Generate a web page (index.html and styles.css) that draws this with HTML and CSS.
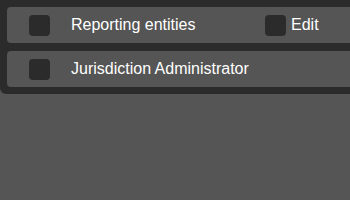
FILE: index.html
```html
<!DOCTYPE html>
<html lang="en">
<head>
  <meta charset="UTF-8">
  <meta name="viewport" content="width=device-width, initial-scale=1.0">
  <title>Permissions</title>
  <link rel="stylesheet" href="styles.css">
</head>
<body>
  <!-- Permission list -->
  <div class="panel">
    <div class="row">
      <span class="check"></span>
      <span class="label">Reporting entities</span>
      <span class="check"></span>
      <span class="action">Edit</span>
    </div>
    <div class="row">
      <span class="check"></span>
      <span class="label">Jurisdiction Administrator</span>
    </div>
  </div>
</body>
</html>
```

FILE: styles.css
```css
body {
  margin: 0;
  background-color: #555555;
  font-family: "Liberation Sans", Arial, sans-serif;
  font-size: 16px;
  color: #ffffff;
}
.panel {
  padding: 7px 0 7px 7px;
  background-color: #2b2b2b;
  border-radius: 0 0 0 6px;
  display: flex;
  flex-direction: column;
  gap: 8px;
}
.row {
  height: 36px;
  display: flex;
  align-items: center;
  padding-left: 22px;
  background-color: #555555;
  border-radius: 4px 0 0 4px;
  white-space: nowrap;
}
.check {
  width: 21px;
  height: 21px;
  border-radius: 4px;
  background-color: #2b2b2b;
  flex-shrink: 0;
}
.label {
  margin-left: 21px;
  width: 194px;
  flex-shrink: 0;
}
.action {
  margin-left: 5px;
}
```
